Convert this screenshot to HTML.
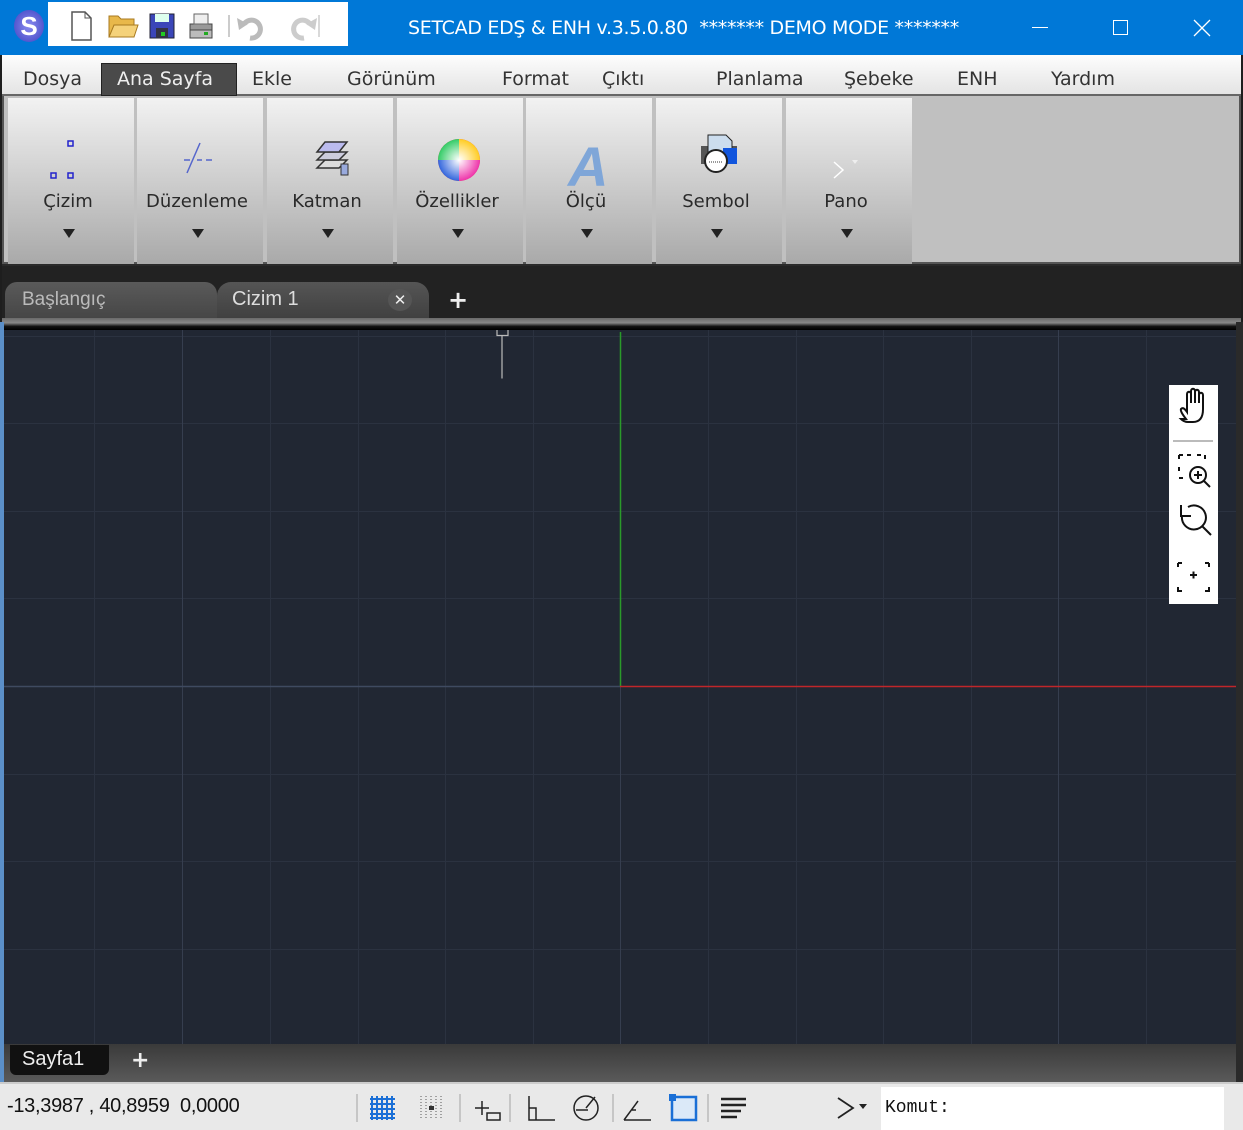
<!DOCTYPE html>
<html><head><meta charset="utf-8"><style>
*{margin:0;padding:0;box-sizing:border-box}
body{width:1243px;height:1130px;overflow:hidden;background:#1e1e1e;font-family:"Liberation Sans","DejaVu Sans",sans-serif;position:relative}
.abs{position:absolute}
#title{left:0;top:0;width:1243px;height:55px;background:#0078d7}
#qat{left:48px;top:2px;width:300px;height:44px;background:#fff}
#menu{left:2px;top:55px;width:1239px;height:41px;background:linear-gradient(#fdfdfd,#e4e4e4);border-bottom:2px solid #666}
.mi{position:absolute;top:13px;font-family:"DejaVu Sans",sans-serif;font-size:19px;color:#333}
#ribbon{left:2px;top:96px;width:1239px;height:170px;background:#2a2a2a}
.grp{position:absolute;top:2px;width:126px;height:166px;background:linear-gradient(#f2f2f2,#a9a9a9)}
.grp .l{position:absolute;top:93px;left:-3px;width:100%;text-align:center;font-family:"DejaVu Sans",sans-serif;font-size:18px;color:#2a2a2a}
.grp .a{position:absolute;top:131px;left:50%;margin-left:-8px;border-left:6px solid transparent;border-right:6px solid transparent;border-top:9px solid #222}
.grp svg{position:absolute;left:0;top:0}
#canvas{left:4px;top:330px;width:1232px;height:714px;background:#212733;overflow:hidden}
</style></head><body>
<div id="title" class="abs">
 <div class="abs" style="left:14px;top:10px;width:30px;height:32px;border-radius:50%;background:radial-gradient(#8a8cf0,#3d40c0);color:#fff;font:bold 26px 'Liberation Sans';text-align:center;line-height:32px">S</div>
 <div id="qat" class="abs">
  <svg width="300" height="44">
   <path d="M24 10h13l6 6v22H24z" fill="#fff" stroke="#555" stroke-width="1.5"/><path d="M37 10v6h6" fill="none" stroke="#555"/>
   <path d="M61 14h9l3 3h13v18H61z" fill="#e8b84a" stroke="#a87a20"/><path d="M61 35l5-12h24l-4 12z" fill="#f5d27a" stroke="#a87a20"/>
   <rect x="102" y="12" width="24" height="24" fill="#3b46b8" stroke="#223"/><rect x="107" y="12" width="14" height="8" fill="#dfe"/><rect x="108" y="26" width="12" height="10" fill="#334"/><rect x="113" y="30" width="4" height="4" fill="#2c2"/>
   <path d="M142 22h22v12h-22z" fill="#999" stroke="#444"/><path d="M146 12h14v10h-14z" fill="#eee" stroke="#666"/><rect x="142" y="28" width="22" height="8" fill="#bbb" stroke="#444"/><rect x="156" y="30" width="4" height="3" fill="#2a2"/>
   <line x1="181" y1="13" x2="181" y2="35" stroke="#bbb" stroke-width="1.5"/>
   <path d="M196 22a9 9 0 1 1 6 14" fill="none" stroke="#bbb" stroke-width="5"/><path d="M189 16l2 12 9-6z" fill="#bbb"/>
   <path d="M262 22a9 9 0 1 0-6 14" fill="none" stroke="#ccc" stroke-width="5"/><path d="M269 16l-2 12-9-6z" fill="#ccc"/>
   <line x1="271" y1="13" x2="271" y2="35" stroke="#ccc" stroke-width="1.5"/>
  </svg>
 </div>
 <div class="abs" style="left:408px;top:17px;color:#fff;font-size:19px;font-family:'DejaVu Sans',sans-serif;letter-spacing:-0.3px">SETCAD EDŞ &amp; ENH v.3.5.0.80 &nbsp;******* DEMO MODE *******</div>
 <div class="abs" style="left:1032px;top:27px;width:16px;height:1px;background:#fff"></div>
 <div class="abs" style="left:1113px;top:20px;width:15px;height:15px;border:1px solid #fff"></div>
 <svg class="abs" style="left:1193px;top:19px" width="18" height="18"><path d="M1 1L17 17M17 1L1 17" stroke="#fff" stroke-width="1.3"/></svg>
</div>
<div id="menu" class="abs">
 <div class="abs" style="left:99px;top:8px;width:136px;height:33px;background:#4a4a4a;border:1px solid #222"></div>
 <span class="mi" style="left:21px">Dosya</span>
 <span class="mi" style="left:115px;color:#eee">Ana Sayfa</span>
 <span class="mi" style="left:250px">Ekle</span>
 <span class="mi" style="left:345px">Görünüm</span>
 <span class="mi" style="left:500px">Format</span>
 <span class="mi" style="left:600px">Çıktı</span>
 <span class="mi" style="left:714px">Planlama</span>
 <span class="mi" style="left:842px">Şebeke</span>
 <span class="mi" style="left:955px">ENH</span>
 <span class="mi" style="left:1049px">Yardım</span>
</div>
<div id="ribbon" class="abs">
 <div class="abs" style="left:0;top:0;width:1239px;height:168px;background:#c0c0c0;border:2px solid #555;border-top:none"></div>
 <div class="grp" style="left:6px"><svg width="126" height="90"><rect x="60" y="43" width="5" height="5" fill="none" stroke="#22c" stroke-width="1.5"/><rect x="43" y="75" width="5" height="5" fill="none" stroke="#22c" stroke-width="1.5"/><rect x="60" y="75" width="5" height="5" fill="none" stroke="#22c" stroke-width="1.5"/></svg><div class="l">Çizim</div><div class="a"></div></div>
 <div class="grp" style="left:135px"><svg width="126" height="90"><path d="M50 75L63 45" stroke="#56c" stroke-width="1.5"/><path d="M47 62h6M60 62h5M69 62h6" stroke="#56c" stroke-width="1.5"/></svg><div class="l">Düzenleme</div><div class="a"></div></div>
 <div class="grp" style="left:265px"><svg width="126" height="90"><path d="M50 70l8-8h22l-8 8z" fill="#ddd" stroke="#333" stroke-width="1.5"/><path d="M50 62l8-8h22l-8 8z" fill="#ccd" stroke="#333" stroke-width="1.5"/><path d="M50 54l8-10h22l-8 10z" fill="#bbe" stroke="#333" stroke-width="1.5"/><rect x="74" y="66" width="7" height="11" fill="#9ad" stroke="#333"/></svg><div class="l">Katman</div><div class="a"></div></div>
 <div class="grp" style="left:395px"><svg width="126" height="90"><defs><radialGradient id="cw"><stop offset="0" stop-color="#fff"/><stop offset="1" stop-color="#fff" stop-opacity="0"/></radialGradient></defs><circle cx="62" cy="62" r="21" fill="#e33"/><path d="M62 62L62 41A21 21 0 0 1 83 62z" fill="#fc2"/><path d="M62 62L83 62A21 21 0 0 1 62 83z" fill="#e3a"/><path d="M62 62L62 83A21 21 0 0 1 41 62z" fill="#36d"/><path d="M62 62L41 62A21 21 0 0 1 62 41z" fill="#3c6"/><circle cx="62" cy="62" r="21" fill="url(#cw)"/></svg><div class="l">Özellikler</div><div class="a"></div></div>
 <div class="grp" style="left:524px"><svg width="126" height="90"><text x="42" y="88" font-family="Liberation Sans" font-style="italic" font-weight="bold" font-size="56" fill="#7fa6d8">A</text></svg><div class="l">Ölçü</div><div class="a"></div></div>
 <div class="grp" style="left:654px"><svg width="126" height="90"><rect x="45" y="48" width="36" height="18" fill="#555"/><path d="M52 37h18l6 6v20H52z" fill="#cde" stroke="#222"/><rect x="67" y="50" width="14" height="16" fill="#15d"/><circle cx="60" cy="63" r="11" fill="#fff" stroke="#222" stroke-width="2"/><path d="M53 64h13" stroke="#333" stroke-dasharray="1 1"/></svg><div class="l">Sembol</div><div class="a"></div></div>
 <div class="grp" style="left:784px"><svg width="126" height="90"><path d="M48 64l9 8-9 8" fill="none" stroke="#fff" stroke-width="1.5"/><path d="M66 62h6l-3 4z" fill="#eee"/></svg><div class="l">Pano</div><div class="a"></div></div>
</div>
<div class="abs" style="left:2px;top:266px;width:1239px;height:56px;background:#222"></div>
<div class="abs" style="left:5px;top:282px;width:212px;height:40px;background:linear-gradient(#5a5a5a,#444);border-radius:12px 12px 0 0"></div>
<div class="abs" style="left:22px;top:289px;font-size:19px;color:#bbb">Başlangıç</div>
<div class="abs" style="left:217px;top:282px;width:212px;height:40px;background:linear-gradient(#555,#3e3e3e);border-radius:14px 14px 0 0"></div>
<div class="abs" style="left:232px;top:288px;font-size:20px;color:#ddd">Cizim 1</div>
<div class="abs" style="left:388px;top:289px;width:24px;height:22px;border-radius:50%;background:#555;color:#eee;font:bold 15px 'DejaVu Sans';text-align:center;line-height:22px">✕</div>
<div class="abs" style="left:448px;top:286px;color:#eee;font:bold 24px 'DejaVu Sans'">+</div>
<div class="abs" style="left:2px;top:318px;width:1239px;height:12px;background:linear-gradient(#6a6a6a,#888 40%,#111 70%,#000)"></div>
<div class="abs" style="left:0;top:322px;width:4px;height:760px;background:#5b8fc8"></div>
<div class="abs" style="left:1236px;top:322px;width:7px;height:760px;background:#2a2a2a"></div>
<div id="canvas" class="abs">
<svg width="1232" height="714" style="position:absolute;left:0;top:0">
<g stroke="#2b3240" stroke-width="1">
<line x1="90.5" y1="0" x2="90.5" y2="714"/><line x1="266.5" y1="0" x2="266.5" y2="714"/><line x1="354.5" y1="0" x2="354.5" y2="714"/><line x1="441.5" y1="0" x2="441.5" y2="714"/><line x1="529.5" y1="0" x2="529.5" y2="714"/><line x1="704.5" y1="0" x2="704.5" y2="714"/><line x1="792.5" y1="0" x2="792.5" y2="714"/><line x1="879.5" y1="0" x2="879.5" y2="714"/><line x1="967.5" y1="0" x2="967.5" y2="714"/><line x1="1142.5" y1="0" x2="1142.5" y2="714"/>
<line x1="0" y1="93.5" x2="1232" y2="93.5"/><line x1="0" y1="181.5" x2="1232" y2="181.5"/><line x1="0" y1="268.5" x2="1232" y2="268.5"/><line x1="0" y1="444.5" x2="1232" y2="444.5"/><line x1="0" y1="531.5" x2="1232" y2="531.5"/><line x1="0" y1="619.5" x2="1232" y2="619.5"/><line x1="0" y1="6.5" x2="1232" y2="6.5"/>
</g>
<g stroke="#363e4f" stroke-width="1"><line x1="178.5" y1="0" x2="178.5" y2="714"/><line x1="1054.5" y1="0" x2="1054.5" y2="714"/><line x1="616.5" y1="356" x2="616.5" y2="714"/></g>
<line x1="0" y1="356.5" x2="616" y2="356.5" stroke="#3f4a60" stroke-width="1.5"/>
<line x1="616.5" y1="2" x2="616.5" y2="356" stroke="#2a9a2a" stroke-width="1.5"/>
<line x1="616" y1="356.5" x2="1232" y2="356.5" stroke="#c0262a" stroke-width="1.5"/>
<path d="M449 -1.5h101M493 -1.5v7h11v-7M498 5.5v43" stroke="#bbb" stroke-width="1.2" fill="none"/>
</svg>
<div class="abs" style="left:1165px;top:55px;width:49px;height:219px;background:#fff"></div>
<svg class="abs" style="left:1165px;top:55px" width="49" height="219" fill="none" stroke="#111" stroke-width="2">
 <path d="M17 34c-3-4-6-8-5-10 2-2 4 0 6 3V9c0-3 4-3 4 0v9V6c0-3 4-3 4 0v12V7c0-3 4-3 4 0v11V10c0-3 4-3 4 0v14c0 8-3 13-10 13h-5c-3 0-5-1-7-3z"/>
 <line x1="4" y1="56" x2="44" y2="56" stroke="#bbb"/>
 <path d="M10 70h4M18 70h4M28 70h4M10 70v4M10 82v4M10 93h4M36 70v4" />
 <circle cx="29" cy="90" r="8"/><path d="M29 86v8M25 90h8M35 96l6 6"/>
 <path d="M13 131a12 12 0 1 0 6-9"/><path d="M12 120v11h10" stroke-width="2"/><path d="M33 141l9 9"/>
 <path d="M9 178h4M9 178v4M36 178h4M40 178v4M9 202v4h4M40 202v4h-4M21 190h7M24.5 186.5v7"/>
</svg>
</div>
<div class="abs" style="left:4px;top:1044px;width:1232px;height:38px;background:linear-gradient(#3a3a3a,#5a5a5a)"></div>
<div class="abs" style="left:10px;top:1045px;width:99px;height:30px;background:#111;border-radius:0 0 6px 6px"></div>
<div class="abs" style="left:22px;top:1048px;color:#eee;font-size:20px">Sayfa1</div>
<div class="abs" style="left:131px;top:1048px;color:#eee;font:bold 22px 'DejaVu Sans'">+</div>
<div class="abs" style="left:0;top:1082px;width:1243px;height:48px;background:#e9e9e9;border-top:2px solid #ccc"></div>
<div class="abs" style="left:7px;top:1095px;font-size:20px;color:#111;letter-spacing:-0.3px">-13,3987 , 40,8959 &nbsp;0,0000</div>
<svg class="abs" style="left:340px;top:1088px" width="540" height="40" fill="none" stroke="#222" stroke-width="1.5">
 <line x1="17" y1="6" x2="17" y2="34" stroke="#bbb"/>
 <g stroke="#1a6fd6" stroke-width="2"><path d="M32 8v24M37 8v24M42 8v24M47 8v24M52 8v24M30 11h25M30 16h25M30 21h25M30 26h25M30 30h25"/></g>
 <g stroke="#888" stroke-dasharray="1 2"><path d="M81 8v24M86 8v24M91 8v24M96 8v24M101 8v24"/></g><rect x="89" y="18" width="5" height="4" fill="#333" stroke="none"/>
 <line x1="120" y1="6" x2="120" y2="34" stroke="#bbb"/>
 <path d="M135 20h14M142 13v14M147 25h13v7h-13z"/>
 <line x1="170" y1="6" x2="170" y2="34" stroke="#bbb"/>
 <path d="M189 8v24h26M189 20h7v12"/>
 <circle cx="246" cy="20" r="12"/><path d="M246 20l9-11M236 22h12"/>
 <line x1="273" y1="6" x2="273" y2="34" stroke="#bbb"/>
 <path d="M284 32l14-19M284 32h27M292 22h4"/>
 <rect x="332" y="9" width="24" height="23" stroke="#1a6fd6" stroke-width="2.5" fill="#dbe9f8"/><rect x="329" y="6" width="7" height="7" fill="#1a6fd6" stroke="none"/>
 <line x1="368" y1="6" x2="368" y2="34" stroke="#bbb"/>
 <path d="M381 11h25M381 17h25M381 23h20M381 29h16" stroke-width="2.5"/>
 <path d="M498 10l15 10-15 10" stroke-width="1.8"/>
</svg>
<div class="abs" style="left:859px;top:1104px;border-left:4px solid transparent;border-right:4px solid transparent;border-top:5px solid #222"></div>
<div class="abs" style="left:881px;top:1087px;width:343px;height:43px;background:#fff"></div>
<div class="abs" style="left:885px;top:1098px;font-family:'Liberation Mono',monospace;font-size:18px;color:#111">Komut:</div>
</body></html>
